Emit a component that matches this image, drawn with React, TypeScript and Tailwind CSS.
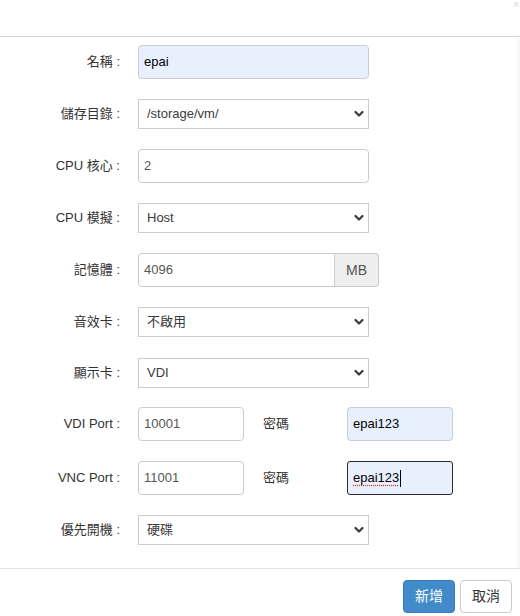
import React from 'react';

const font = { fontFamily: '"Liberation Sans", "Noto Sans CJK TC", sans-serif' };

const Label = ({ children }: { children: React.ReactNode }) => (
  <label className="w-[123px] shrink-0 pr-[3px] text-right text-[13px] text-[#333]">{children}</label>
);

const Chevron = () => (
  <svg className="pointer-events-none absolute right-[5px] top-1/2 -translate-y-1/2" width="10" height="7" viewBox="0 0 10 7">
    <path d="M1.5 1.5 L5 5 L8.5 1.5" fill="none" stroke="#3a3a3a" strokeWidth="2.2" strokeLinecap="round" strokeLinejoin="round" />
  </svg>
);

const Select = ({ value }: { value: string }) => (
  <div className="relative h-[30px] w-[231px]">
    <div className="flex h-full items-center border border-[#cdcdcd] bg-white pl-[8px] text-[13px] text-[#3a3a3a]">
      {value}
    </div>
    <Chevron />
  </div>
);

const Input = ({ value, w = 'w-[231px]', autofill = false }: { value: string; w?: string; autofill?: boolean }) => (
  <div
    className={`flex h-[34px] ${w} items-center rounded-[4px] border border-[#ccc] pl-[5px] text-[13px] ${
      autofill ? 'bg-[#e8f0fe] text-black' : 'bg-white text-[#555]'
    }`}
  >
    {value}
  </div>
);

const Row = ({ children, className = '' }: { children: React.ReactNode; className?: string }) => (
  <div className={`flex min-h-[34px] items-center gap-[15px] ${className}`}>{children}</div>
);

export default function App() {
  return (
    <div className="relative h-[616px] w-[520px] overflow-hidden bg-white" style={font}>
      <div className="h-[37px] border-b border-[#d6d6d6]">
        <span className="absolute top-0 right-[1px] text-[10px] leading-none text-[#d4d4d4]">×</span>
      </div>

      <div className="flex h-[531px] flex-col gap-[18px] border-r-[3px] border-[#f7f7f7] pt-[8px]">
        <Row>
          <Label>名稱 :</Label>
          <Input value="epai" autofill />
        </Row>
        <Row>
          <Label>儲存目錄 :</Label>
          <Select value="/storage/vm/" />
        </Row>
        <Row>
          <Label>CPU 核心 :</Label>
          <Input value="2" />
        </Row>
        <Row>
          <Label>CPU 模擬 :</Label>
          <Select value="Host" />
        </Row>
        <Row>
          <Label>記憶體 :</Label>
          <div className="flex h-[34px]">
            <div className="flex w-[197px] items-center rounded-l-[4px] border border-[#ccc] bg-white pl-[5px] text-[13px] text-[#555]">
              4096
            </div>
            <div className="flex w-[44px] items-center justify-center rounded-r-[4px] border border-l-0 border-[#ccc] bg-[#eee] text-[14px] text-[#555]">
              MB
            </div>
          </div>
        </Row>
        <Row>
          <Label>音效卡 :</Label>
          <Select value="不啟用" />
        </Row>
        <Row className="-mt-[1px]">
          <Label>顯示卡 :</Label>
          <Select value="VDI" />
        </Row>
        <Row className="-mt-[1px]">
          <Label>VDI Port :</Label>
          <Input value="10001" w="w-[106px]" />
          <span className="ml-[4px] w-[69px] text-[13px] text-[#333]">密碼</span>
          <Input value="epai123" w="w-[106px]" autofill />
        </Row>
        <Row className="mt-[2px]">
          <Label>VNC Port :</Label>
          <Input value="11001" w="w-[106px]" />
          <span className="ml-[4px] w-[69px] text-[13px] text-[#333]">密碼</span>
          <div className="flex h-[34px] w-[106px] items-center rounded-[3px] border border-[#2b2b2b] bg-[#e8f0fe] pl-[5px] text-[13px] text-black">
            <span className="underline decoration-red-500 decoration-dotted underline-offset-[3px]">epai123</span>
            <span className="ml-px h-[17px] w-px bg-black" />
          </div>
        </Row>
        <Row>
          <Label>優先開機 :</Label>
          <Select value="硬碟" />
        </Row>
      </div>

      <div className="flex justify-end gap-[5px] border-t border-[#e2e2e2] pt-[11px] pr-[8px]">
        <button className="h-[33px] w-[52px] rounded-[4px] border border-[#357ebd] bg-[#428bca] text-[14px] text-white">
          新增
        </button>
        <button className="h-[33px] w-[52px] rounded-[4px] border border-[#ccc] bg-white text-[14px] text-[#333]">
          取消
        </button>
      </div>
    </div>
  );
}
